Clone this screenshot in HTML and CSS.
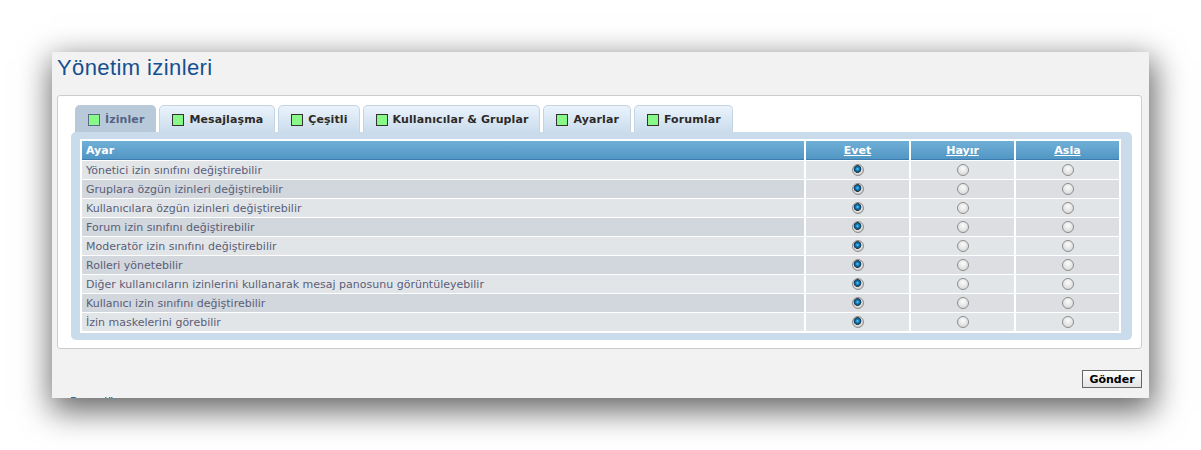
FILE: index.html
```html
<!DOCTYPE html>
<html>
  <head>
    <title>Yönetim izinleri</title>
    <link rel="stylesheet" href="styles.css">
  </head>
  <body>
    <div class="window">
      <h1>Yönetim izinleri</h1>
      <div class="panel">
        <div class="tabs">
          <span class="tab active"><i class="box"></i>İzinler</span>
          <span class="tab"><i class="box"></i>Mesajlaşma</span>
          <span class="tab"><i class="box"></i>Çeşitli</span>
          <span class="tab"><i class="box"></i>Kullanıcılar &amp; Gruplar</span>
          <span class="tab"><i class="box"></i>Ayarlar</span>
          <span class="tab"><i class="box"></i>Forumlar</span>
        </div>
        <div class="tabbox">
          <div class="tablewrap">
            <table class="perms">
              <thead>
                <tr>
                  <th class="name">Ayar</th>
                  <th class="col"><a href="#">Evet</a></th>
                  <th class="col"><a href="#">Hayır</a></th>
                  <th class="col"><a href="#">Asla</a></th>
                </tr>
              </thead>
              <tbody id="rows"></tbody>
            </table>
          </div>
        </div>
      </div>
      <div class="actions">
        <button type="button">Gönder</button>
      </div>
      <div class="more"><a href="#">Başa dön</a></div>
    </div>
    <script type="text/javascript">
      var settings = [
        "Yönetici izin sınıfını değiştirebilir",
        "Gruplara özgün izinleri değiştirebilir",
        "Kullanıcılara özgün izinleri değiştirebilir",
        "Forum izin sınıfını değiştirebilir",
        "Moderatör izin sınıfını değiştirebilir",
        "Rolleri yönetebilir",
        "Diğer kullanıcıların izinlerini kullanarak mesaj panosunu görüntüleyebilir",
        "Kullanıcı izin sınıfını değiştirebilir",
        "İzin maskelerini görebilir"
      ];
      var html = "";
      for(var i=0; i<settings.length; i++) {
        html += '<tr class="' + (i%2==0 ? 'row1' : 'row2') + '">';
        html += '<td class="name">' + settings[i] + '</td>';
        html += '<td class="col"><input type="radio" name="s' + i + '" checked></td>';
        html += '<td class="col"><input type="radio" name="s' + i + '"></td>';
        html += '<td class="col"><input type="radio" name="s' + i + '"></td>';
        html += '</tr>';
      }
      document.getElementById("rows").innerHTML = html;
    </script>
  </body>
</html>
```
FILE: styles.css
```css
html, body {
  margin: 0;
  height: 100%;
  background: #fff;
}
body {
  box-sizing: border-box;
  min-height: 450px;
  padding: 52px 0 0 52px;
  font-family: "DejaVu Sans", Verdana, sans-serif;
  font-size: 11px;
}
.window {
  width: 1097px;
  height: 346px;
  background: #f2f2f2;
  overflow: hidden;
  box-shadow: 2px 10px 30px 3px rgba(0,0,0,0.6);
}
h1 {
  margin: 0;
  height: 43px;
  padding: 3px 0 0 5px;
  box-sizing: border-box;
  font-family: "Liberation Sans", Arial, sans-serif;
  font-weight: normal;
  font-size: 22px;
  letter-spacing: 0.4px;
  color: #14508f;
}
.panel {
  margin: 0 7px 0 5px;
  height: 254px;
  box-sizing: border-box;
  padding: 9px 9px 9px 13px;
  background: #fff;
  border: 1px solid #ccc;
  border-radius: 3px;
}
.tabs {
  display: flex;
  gap: 3px;
  margin-left: 4px;
  height: 27px;
}
.tab {
  display: flex;
  align-items: center;
  gap: 5px;
  padding: 1px 11px 0 12px;
  border: 1px solid #c4d4e3;
  border-bottom: none;
  border-radius: 5px 5px 0 0;
  background: linear-gradient(#eaf3fc, #cbdcec);
  font-weight: bold;
  letter-spacing: 0.1px;
  color: #2c2a28;
}
.tab.active {
  background: #b8c9d9;
  border-color: #b8c9d9;
  color: #536482;
}
.box {
  display: inline-block;
  width: 10px;
  height: 10px;
  border: 1px solid #333;
  background: #88f888;
}
.tab.active .box {
  border-color: #5a6a80;
}
.tabbox {
  background: #cadceb;
  border-radius: 5px;
  padding: 7px 11px 7px 9px;
}
.tablewrap {
  background: #fff;
  padding: 1px 0;
}
.perms {
  width: 100%;
  border-collapse: separate;
  border-spacing: 2px 1px;
}
.perms th {
  height: 18px;
  padding: 0 4px;
  background: linear-gradient(#70b0d7, #5196c4);
  border-bottom: 1px solid #3e7bae;
  color: #fff;
  font-weight: bold;
  text-align: left;
}
.perms th.col {
  text-align: center;
}
.perms th a {
  color: #fff;
}
.perms td {
  height: 18px;
  padding: 0 4px;
  color: #595e78;
}
.perms .col {
  width: 95px;
  text-align: center;
}
.row1 td {
  background: #e2e5e8;
}
.row2 td {
  background: #dcdee1;
}
.row2 td.name {
  background: #d2d6dd;
}
input[type=radio] {
  -webkit-appearance: none;
  appearance: none;
  display: block;
  margin: 0 auto;
  width: 12px;
  height: 12px;
  border-radius: 50%;
  border: 1px solid #8d8d8d;
  background: radial-gradient(circle at 50% 35%, #fbfbfb, #d2d2d2);
  box-sizing: border-box;
}
input[type=radio]:checked {
  background: radial-gradient(circle at 45% 40%, #7fd0f5 0, #1284c4 1.5px, #08507f 3px, #3a3a3a 3.6px, #e8e8e8 4.2px, #c8c8c8 6px);
}
.actions {
  display: flex;
  justify-content: flex-end;
  margin: 21px 7px 0 0;
}
button {
  width: 60px;
  height: 18px;
  padding: 0;
  border: 1px solid #666;
  background: linear-gradient(#fdfdfd, #e4e4e4);
  font-family: "DejaVu Sans", Verdana, sans-serif;
  font-size: 11px;
  font-weight: bold;
  color: #000;
}
.more {
  margin: 7px 0 0 18px;
}
.more a {
  color: #105289;
  text-decoration: none;
  font-size: 11px;
}
```
